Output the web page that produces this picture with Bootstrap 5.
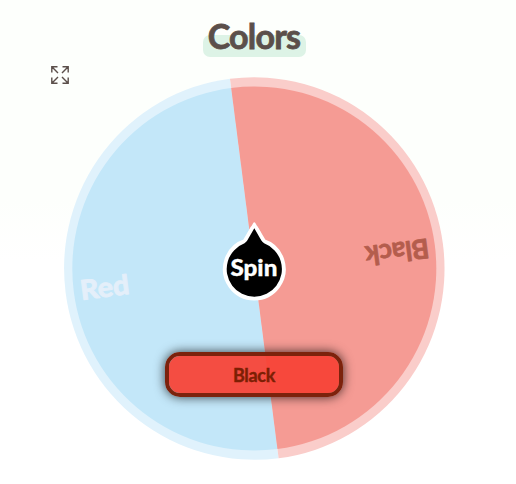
<!DOCTYPE html>
<html lang="en">
<head>
<meta charset="utf-8">
<meta name="viewport" content="width=device-width, initial-scale=1">
<title>Colors</title>
<link href="https://cdn.jsdelivr.net/npm/bootstrap@5.3.0/dist/css/bootstrap.min.css" rel="stylesheet">
<style>
  body { font-family: Lato, "Open Sans", sans-serif; background: linear-gradient(#fdfffc 0, #fdfffc 200px, #fff 260px); min-height: 484px; }
  .page { width: 508px; height: 484px; padding-top: 16px; }
  .title-wrap { margin-left: 1px; }
  .wheel-title { width: 103px; height: 41px; font-size: 34px; line-height: 40px; font-weight: 700; letter-spacing: -.8px; text-indent: -1px; color: #5b4f4a; -webkit-text-stroke: .8px #5b4f4a; }
  .title-mark { background: #ddf3e6; height: 22px; border-radius: 7px; }
  .stage { width: 384px; height: 386px; margin-top: 19px; }
  .expand { left: -11px; top: -10px; color: #5b4f4a; }
  .expand svg, .stage > svg { display: block; }
  .wheel-label { font-size: 27px; font-weight: 700; }
  .spin-label { font-size: 22.5px; font-weight: 900; }
  .result { left: 103px; top: 276px; width: 178px; height: 45px; border: 4px solid #7c220c; border-radius: 15px; background: rgba(246,67,54,.94); background-clip: padding-box; box-shadow: 0 0 11px rgba(0,0,0,.75); color: #7c1f04; font-size: 18px; font-weight: 700; letter-spacing: -.3px; line-height: 1; -webkit-text-stroke: .4px #7c1f04; }
</style>
</head>
<body>
<main class="page d-flex flex-column align-items-center">
  <header class="title-wrap position-relative">
    <div class="title-mark position-absolute bottom-0 start-0 w-100"></div>
    <h1 class="wheel-title position-relative text-center m-0">Colors</h1>
  </header>
  <section class="stage position-relative">
    <svg width="384" height="386" viewBox="62 76 384 386" aria-label="Colors wheel">
      <g transform="rotate(-7.3 254.3 268.5)">
        <path d="M254.3 77.2A190.2 191.3 0 0 0 254.3 459.8Z" fill="#e0f2fc"/>
        <path d="M254.3 77.2A190.2 191.3 0 0 1 254.3 459.8Z" fill="#facdca"/>
        <path d="M254.3 86.5A182 182 0 0 0 254.3 450.5Z" fill="#c3e7f9"/>
        <path d="M254.3 86.5A182 182 0 0 1 254.3 450.5Z" fill="#f59b94"/>
      </g>
      <g class="wheel-label">
        <text transform="translate(81.5 300) rotate(-7.3)" textLength="49" lengthAdjust="spacingAndGlyphs" fill="#e4effa" stroke="#e4effa" stroke-width="1" stroke-linejoin="round">Red</text>
        <text transform="translate(427.8 238.5) rotate(172.7)" textLength="64" lengthAdjust="spacingAndGlyphs" fill="#b45d4d" stroke="#b45d4d" stroke-width=".8" stroke-linejoin="round">Black</text>
      </g>
      <path d="M254.3 228.3L245.9 242.7A27.6 27.6 0 1 0 262.7 242.7Z" fill="#fff" stroke="#fff" stroke-width="7.6" stroke-linejoin="miter" stroke-miterlimit="1.8"/>
      <path d="M254.3 223.6L248.9 233H259.7Z" fill="#fff" stroke="#fff" stroke-width="2.4" stroke-linejoin="round"/>
      <path d="M254.3 228.3L247.4 240.3Q246.5 242 244.5 243.3A27.6 27.6 0 1 0 264.1 243.3Q262.1 242 261.2 240.3Z" fill="#000"/>
      <text class="spin-label" x="230.4" y="276" textLength="47" lengthAdjust="spacingAndGlyphs" fill="#fff" stroke="#fff" stroke-width=".3">Spin</text>
    </svg>
    <button class="expand position-absolute btn p-0 border-0" aria-label="Full screen">
      <svg width="18" height="18" viewBox="0 0 18 18" fill="none" stroke="currentColor" stroke-width="1.4"><path d="M.8 6.5V.8H6.5M.8 .8L7 7M11.5 .8H17.2V6.5M17.2 .8L11 7M.8 11.5V17.2H6.5M.8 17.2L7 11M11.5 17.2H17.2V11.5M17.2 17.2L11 11"/></svg>
    </button>
    <div class="result position-absolute d-flex align-items-center justify-content-center">Black</div>
  </section>
</main>
<script src="https://cdn.jsdelivr.net/npm/bootstrap@5.3.0/dist/js/bootstrap.bundle.min.js"></script>
</body>
</html>
